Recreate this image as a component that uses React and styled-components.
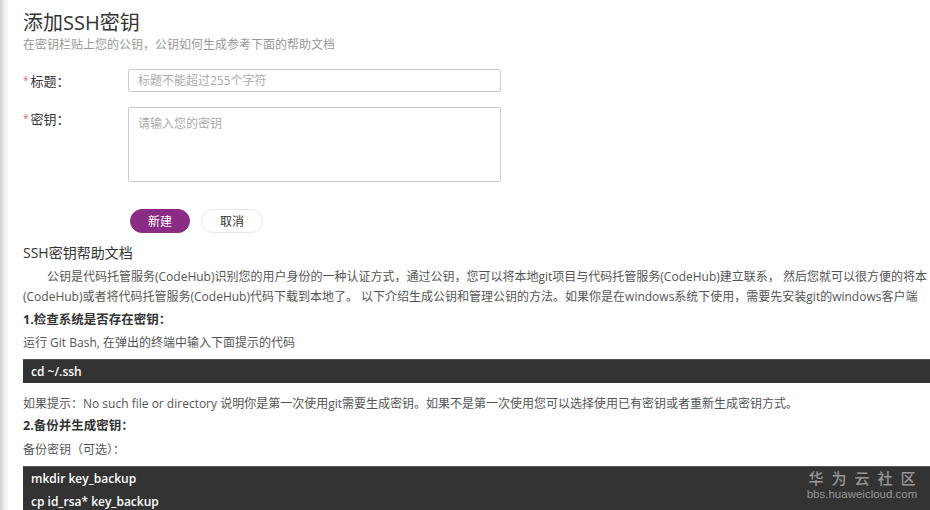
import React from 'react'
import styled, { createGlobalStyle } from 'styled-components'

const GlobalStyle = createGlobalStyle`
  html, body {
    margin: 0;
    padding: 0;
    background: #fff;
  }
  body {
    font-family: "Open Sans", "Noto Sans CJK SC", sans-serif;
    color: #333;
    overflow: hidden;
  }
`

export default function App() {
  return (
    <Page>
      <GlobalStyle />
      <Content>
        <Title>添加SSH密钥</Title>
        <Subtitle>在密钥栏贴上您的公钥，公钥如何生成参考下面的帮助文档</Subtitle>

        <Form>
          <Row>
            <Label>标题：</Label>
            <Input placeholder="标题不能超过255个字符" />
          </Row>
          <Row>
            <Label>密钥：</Label>
            <TextArea placeholder="请输入您的密钥" />
          </Row>
          <Actions>
            <Button primary>新建</Button>
            <Button>取消</Button>
          </Actions>
        </Form>

        <Help>
          <HelpTitle>SSH密钥帮助文档</HelpTitle>
          <Para>
            <Line indent>
              公钥是代码托管服务(CodeHub)识别您的用户身份的一种认证方式，通过公钥，您可以将本地git项目与代码托管服务(CodeHub)建立联系， 然后您就可以很方便的将本
            </Line>
            <Line>
              (CodeHub)或者将代码托管服务(CodeHub)代码下载到本地了。 以下介绍生成公钥和管理公钥的方法。如果你是在windows系统下使用，需要先安装git的windows客户端
            </Line>
          </Para>
          <Step>1.检查系统是否存在密钥：</Step>
          <Text>运行 Git Bash, 在弹出的终端中输入下面提示的代码</Text>
          <Code>
            <CodeLine>cd ~/.ssh</CodeLine>
          </Code>
          <Text gap="11px">如果提示：No such file or directory 说明你是第一次使用git需要生成密钥。如果不是第一次使用您可以选择使用已有密钥或者重新生成密钥方式。</Text>
          <Step top="2px">2.备份并生成密钥：</Step>
          <Text gap="4px">备份密钥（可选）：</Text>
          <Code tail>
            <CodeLine>mkdir key_backup</CodeLine>
            <CodeLine>cp id_rsa* key_backup</CodeLine>
          </Code>
        </Help>
      </Content>

      <Watermark>
        <WmTitle>华为云社区</WmTitle>
        <WmUrl>bbs.huaweicloud.com</WmUrl>
      </Watermark>
    </Page>
  )
}

const Page = styled.div`
  position: relative;
  width: 930px;
  height: 510px;
  overflow: hidden;
  background: linear-gradient(to right, #cfcfcf 0, #e6e6e6 3px, #f6f6f6 6px, #fff 9px);
`

const Content = styled.div`
  padding: 11px 0 0 23px;
  width: 1100px;
`

const Title = styled.h1`
  margin: 0;
  font-size: 20px;
  line-height: 24px;
  font-weight: normal;
  color: #333;
`

const Subtitle = styled.p`
  margin: 2px 0 0;
  font-size: 12px;
  line-height: 16px;
  color: #999;
`

const Form = styled.div`
  display: flex;
  flex-direction: column;
  gap: 15px;
  margin-top: 16px;
`

const Row = styled.div`
  display: flex;
  align-items: flex-start;
`

const Label = styled.label`
  width: 105px;
  padding-top: 3px;
  font-size: 13px;
  line-height: 16px;
  color: #333;

  &::before {
    content: '*';
    color: #e0677a;
    font-size: 10px;
    margin-right: 2px;
    vertical-align: 2px;
  }
`

const fieldBase = `
  box-sizing: border-box;
  width: 373px;
  border: 1px solid #ccc;
  border-radius: 2px;
  padding: 0 9px;
  font-family: "Open Sans", "Noto Sans CJK SC", sans-serif;
  font-size: 12px;
  color: #333;
  outline: none;
  &::placeholder {
    color: #aaa;
  }
`

const Input = styled.input`
  ${fieldBase}
  height: 23px;
`

const TextArea = styled.textarea`
  ${fieldBase}
  height: 75px;
  padding-top: 6px;
  resize: none;
`

const Actions = styled.div`
  display: flex;
  gap: 11px;
  margin: 12px 0 0 107px;
`

const Button = styled.button`
  box-sizing: border-box;
  height: 24px;
  width: ${p => (p.primary ? '60px' : '62px')};
  border-radius: 12px;
  border: 1px solid ${p => (p.primary ? '#8a2b84' : '#e6e6e6')};
  background: ${p => (p.primary ? '#8a2b84' : '#fff')};
  color: ${p => (p.primary ? '#fff' : '#333')};
  font-family: "Open Sans", "Noto Sans CJK SC", sans-serif;
  font-size: 12px;
  padding: 0;
  cursor: pointer;
`

const Help = styled.div`
  margin-top: 10px;
`

const HelpTitle = styled.h3`
  margin: 0;
  font-size: 14px;
  line-height: 20px;
  font-weight: normal;
  color: #333;
`

const Para = styled.div`
  margin-top: 4px;
  font-size: 12px;
  line-height: 20px;
  color: #555;
`

const Line = styled.div`
  white-space: nowrap;
  text-indent: ${p => (p.indent ? '24px' : '0')};
`

const Step = styled.div`
  margin-top: ${p => p.top || '3px'};
  font-size: 12.5px;
  line-height: 20px;
  font-weight: bold;
  color: #333;
`

const Text = styled.div`
  margin-top: ${p => p.gap || '3px'};
  font-size: 12px;
  line-height: 20px;
  color: #555;
  white-space: nowrap;
`

const Code = styled.div`
  margin-top: 6px;
  background: #333;
  padding: 0 8px ${p => (p.tail ? '20px' : '0')};
  border-top: 1px solid #555;
`

const CodeLine = styled.div`
  font-size: 12px;
  line-height: 23px;
  font-weight: 600;
  color: #fff;
`

const Watermark = styled.div`
  position: absolute;
  right: 14px;
  bottom: 9px;
  width: 108px;
  display: flex;
  flex-direction: column;
  align-items: center;
  color: rgba(195, 195, 195, 0.7);
  pointer-events: none;
`

const WmTitle = styled.div`
  font-family: "Noto Sans CJK SC", sans-serif;
  font-size: 15px;
  line-height: 18px;
  letter-spacing: 8px;
  margin-right: -8px;
  font-weight: 500;
`

const WmUrl = styled.div`
  font-family: "Liberation Sans", sans-serif;
  font-size: 11.5px;
  line-height: 14px;
`
